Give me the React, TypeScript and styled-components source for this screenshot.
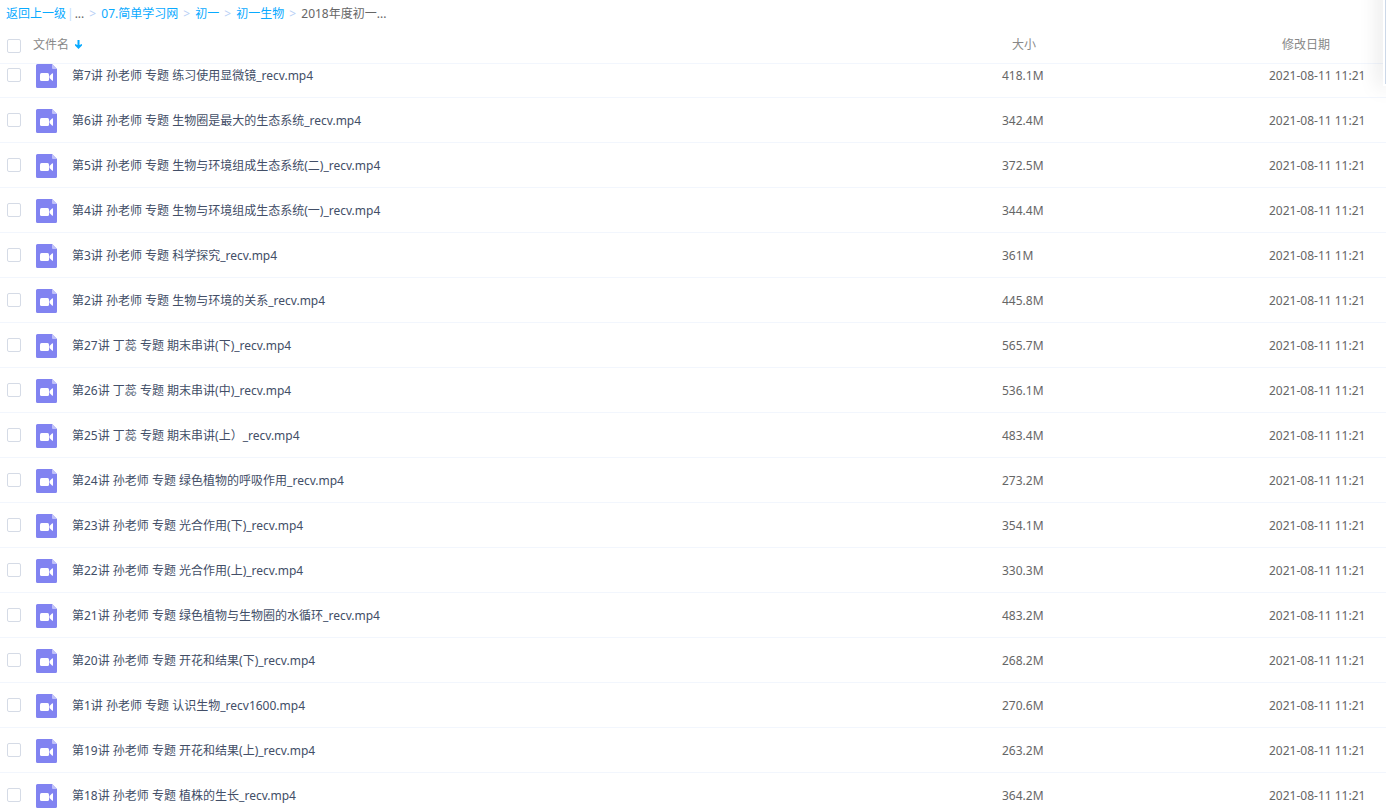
import React from "react";
import styled, { createGlobalStyle } from "styled-components";

const GlobalStyle = createGlobalStyle`
  * { box-sizing: border-box; }
  body {
    margin: 0;
    background: #fff;
    color: #666;
    font: 12px/18px "Noto Sans", "Noto Sans CJK SC", sans-serif;
  }
`;

const Page = styled.main`
  position: relative;
  height: 100vh;
  display: flex;
  flex-direction: column;
  overflow: hidden;
`;

const Breadcrumb = styled.nav`
  display: flex;
  align-items: center;
  height: 28px;
  padding-left: 6px;
  white-space: nowrap;
`;

const Crumb = styled.a`
  color: #09aaff;
  text-decoration: none;
`;

const Divider = styled.span`
  margin: 0 1px;
  color: #c4dbfe;
`;

const Chevron = styled.span`
  width: 17px;
  text-align: center;
  color: #b8d0f6;
`;

const Table = styled.table`
  display: flex;
  flex-direction: column;
  flex: 1;
  min-height: 0;
`;

const Head = styled.thead`
  display: block;
`;

const Body = styled.tbody`
  display: block;
  flex: 1;
  overflow: hidden;

  /* the list is scrolled slightly beneath its header */
  & > tr:first-child { margin-top: -11px; }
`;

const Row = styled.tr<{ $head?: boolean }>`
  display: grid;
  grid-template-columns: minmax(0, 1fr) 267px 117px;
  align-items: center;
  height: ${(p) => (p.$head ? 36 : 45)}px;
  border-bottom: 1px solid #f2f6fd;
`;

const HeadCell = styled.th<{ $indent?: number }>`
  display: flex;
  align-items: center;
  padding: 0 0 0 ${(p) => p.$indent ?? 0}px;
  color: #888;
  font-weight: 400;
  text-align: left;
`;

const HeadText = styled.span`
  padding-bottom: 2px;
`;

const Cell = styled.td`
  display: flex;
  align-items: center;
  padding: 0;
  white-space: nowrap;
`;

const ValueCell = styled(Cell)`
  padding-top: 2px;
`;

const Checkbox = styled.input`
  appearance: none;
  flex: none;
  width: 14px;
  height: 14px;
  margin: 0 0 0 7px;
  border: 1px solid #d5dbe6;
  border-radius: 2px;
  background: #fff;

  &:checked { background: #09aaff; border-color: #09aaff; }
`;

const SortButton = styled.button`
  display: flex;
  align-items: center;
  gap: 5px;
  margin: 0 0 0 12px;
  padding: 0 0 2px;
  border: 0;
  background: none;
  color: inherit;
  font: inherit;
  cursor: pointer;
`;

const FileLabel = styled.label`
  display: flex;
  align-items: center;
  gap: 15px;
  margin-left: 15px;
  padding-top: 2px;
  color: #424e67;
`;

const FloatingPanel = styled.aside`
  position: absolute;
  top: -40px;
  right: 0;
  width: 3px;
  height: 126px;
  border: solid #fff;
  border-width: 0 0 2px 2px;
  background: #ccd8e8;
  box-shadow: 0 0 20px 1px rgba(0, 0, 0, 0.25);
`;

const VideoIcon = () => (
  <svg width="21" height="24" viewBox="0 0 21 24" aria-hidden="true">
    <path d="M1.5 0H16l5 5v17.5a1.5 1.5 0 0 1-1.5 1.5h-18A1.5 1.5 0 0 1 0 22.5v-21A1.5 1.5 0 0 1 1.5 0z" fill="#8183f1" />
    <path d="M16 0l5 5h-4a1 1 0 0 1-1-1z" fill="#c0c1f8" />
    <rect x="4" y="9" width="9" height="8" rx="1.5" fill="#fff" />
    <path d="M13.500 12l2.500-2.600q1-.7 1 .4v6.400q0 1.100-1 .4L13.500 14z" fill="#fff" />
  </svg>
);

const SortArrow = () => (
  <svg width="9" height="11" viewBox="0 0 9 11" aria-hidden="true">
    <path d="M3.5 1h2v5L8 5v1.500L4.500 10 1 6.500V5l2.500 1z" fill="#09aaff" />
  </svg>
);

const files: [string, string][] = [
  ["第7讲 孙老师 专题 练习使用显微镜_recv.mp4", "418.1M"],
  ["第6讲 孙老师 专题 生物圈是最大的生态系统_recv.mp4", "342.4M"],
  ["第5讲 孙老师 专题 生物与环境组成生态系统(二)_recv.mp4", "372.5M"],
  ["第4讲 孙老师 专题 生物与环境组成生态系统(一)_recv.mp4", "344.4M"],
  ["第3讲 孙老师 专题 科学探究_recv.mp4", "361M"],
  ["第2讲 孙老师 专题 生物与环境的关系_recv.mp4", "445.8M"],
  ["第27讲 丁蕊 专题 期末串讲(下)_recv.mp4", "565.7M"],
  ["第26讲 丁蕊 专题 期末串讲(中)_recv.mp4", "536.1M"],
  ["第25讲 丁蕊 专题 期末串讲(上）_recv.mp4", "483.4M"],
  ["第24讲 孙老师 专题 绿色植物的呼吸作用_recv.mp4", "273.2M"],
  ["第23讲 孙老师 专题 光合作用(下)_recv.mp4", "354.1M"],
  ["第22讲 孙老师 专题 光合作用(上)_recv.mp4", "330.3M"],
  ["第21讲 孙老师 专题 绿色植物与生物圈的水循环_recv.mp4", "483.2M"],
  ["第20讲 孙老师 专题 开花和结果(下)_recv.mp4", "268.2M"],
  ["第1讲 孙老师 专题 认识生物_recv1600.mp4", "270.6M"],
  ["第19讲 孙老师 专题 开花和结果(上)_recv.mp4", "263.2M"],
  ["第18讲 孙老师 专题 植株的生长_recv.mp4", "364.2M"],
];

export default function App() {
  return (
    <Page>
      <GlobalStyle />
      <Breadcrumb>
        <Crumb href="#">返回上一级</Crumb>
        <Divider>|</Divider>
        <span>...</span>
        <Chevron>&gt;</Chevron>
        <Crumb href="#">07.简单学习网</Crumb>
        <Chevron>&gt;</Chevron>
        <Crumb href="#">初一</Crumb>
        <Chevron>&gt;</Chevron>
        <Crumb href="#">初一生物</Crumb>
        <Chevron>&gt;</Chevron>
        <span>2018年度初一...</span>
      </Breadcrumb>
      <Table>
        <Head>
          <Row $head>
            <HeadCell>
              <Checkbox type="checkbox" aria-label="全选" />
              <SortButton>文件名<SortArrow /></SortButton>
            </HeadCell>
            <HeadCell $indent={10}><HeadText>大小</HeadText></HeadCell>
            <HeadCell $indent={13}><HeadText>修改日期</HeadText></HeadCell>
          </Row>
        </Head>
        <Body>
          {files.map(([name, size], i) => (
            <Row key={name}>
              <Cell>
                <Checkbox type="checkbox" id={`file-${i}`} />
                <FileLabel htmlFor={`file-${i}`}><VideoIcon />{name}</FileLabel>
              </Cell>
              <ValueCell>{size}</ValueCell>
              <ValueCell>2021-08-11 11:21</ValueCell>
            </Row>
          ))}
        </Body>
      </Table>
      <FloatingPanel />
    </Page>
  );
}
